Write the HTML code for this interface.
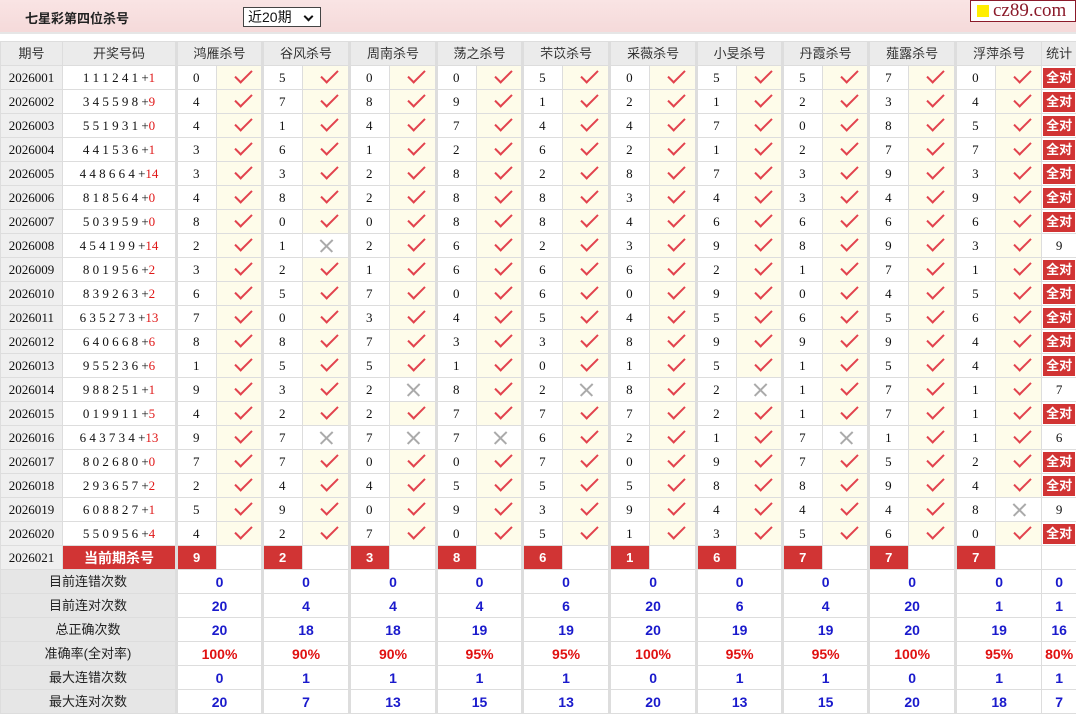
<!DOCTYPE html>
<html><head><meta charset="utf-8">
<style>
*{margin:0;padding:0;box-sizing:border-box}
body{width:1076px;height:711px;overflow:hidden;background:#fff;font-family:"Liberation Sans","Noto Sans CJK SC",sans-serif;position:relative}
.top{position:absolute;left:0;top:0;width:1076px;height:34px;background:linear-gradient(#f9e4e4,#f5dada);border-bottom:2px solid #e6e6e6}
.title{position:absolute;left:25px;top:8px;font-size:13px;font-weight:bold;color:#222}
.sel{position:absolute;left:243px;top:7px;width:78px;height:20px;border:1px solid #444;background:#fff;font-size:14px;padding-left:4px;line-height:18px;color:#111}
.sel:after{content:'';position:absolute;right:8px;top:5px;width:5px;height:5px;border-right:2px solid #111;border-bottom:2px solid #111;transform:rotate(45deg)}
.logo{position:absolute;left:970px;top:0;width:106px;height:22px;background:#fff;border:1px solid #8b1a2a;font-family:"Liberation Serif",serif;font-size:19px;color:#8b1a2a;line-height:19px;padding-left:22px}
.logo:before{content:'';position:absolute;left:6px;top:4px;width:12px;height:12px;background:#ffee00}
table{position:absolute;left:0;top:41px;border-collapse:collapse;table-layout:fixed;width:1076px}
tr{height:24px}
td{height:23px;line-height:18px;border:1px solid #ddd;text-align:center;font-family:"Liberation Serif",serif;font-size:13px;color:#111;padding:0;overflow:hidden;white-space:nowrap}
tr.h td{background:#ebebeb;font-family:"Liberation Sans","Noto Sans CJK SC",sans-serif;color:#333}
td.p{background:#efefef}
td.g{border-left:3px solid #ddd;text-align:left;padding-left:15px}
tr.h td.g{text-align:center;padding:0}
td.c{background:#fefcea;position:relative}
td.c:after{content:'';position:absolute;left:18px;top:4px;width:15px;height:7px;border-left:2px solid #e2434e;border-bottom:2px solid #e2434e;transform:rotate(-45deg)}
td.x{position:relative;background:#fff}
td.x:before,td.x:after{content:'';position:absolute;left:15px;top:11px;width:17px;height:1.5px;background:#aaa;transform:rotate(45deg)}
td.x:after{transform:rotate(-45deg)}
.r{color:#e01818}
td.q{padding:1px 1px}
td.q b,td.cur b{display:block;background:#d13434;color:#fff;font-family:"Liberation Sans","Noto Sans CJK SC",sans-serif;font-size:13px;line-height:20px}
td.cr{background:#d13434;color:#fff;font-weight:bold;text-align:left;padding-left:15px;font-family:"Liberation Sans",sans-serif}
td.cur{background:#d13434;color:#fff;font-weight:bold;font-family:"Liberation Sans","Noto Sans CJK SC",sans-serif;font-size:14px}
td.l{background:#e6e6e6;font-family:"Liberation Sans","Noto Sans CJK SC",sans-serif;color:#222}
td.v{font-family:"Liberation Sans",sans-serif;font-weight:bold;color:#1a1acc;font-size:14px;border-left:3px solid #ddd}
td.v.last{border-left:1px solid #ddd}
td.v.rr{color:#e01010}
</style></head><body>
<div class="top"><div class="title">七星彩第四位杀号</div><div class="sel">近20期</div></div>
<div class="logo">cz89.com</div>
<table>
<colgroup><col style="width:62px"><col style="width:114px">
<col style="width:40px"><col style="width:46px"><col style="width:40px"><col style="width:47px"><col style="width:40px"><col style="width:47px"><col style="width:40px"><col style="width:46px"><col style="width:40px"><col style="width:47px"><col style="width:40px"><col style="width:47px"><col style="width:40px"><col style="width:46px"><col style="width:40px"><col style="width:46px"><col style="width:40px"><col style="width:47px"><col style="width:40px"><col style="width:46px"><col style="width:35px"></colgroup>
<tr class="h"><td>期号</td><td>开奖号码</td><td class="g" colspan="2">鸿雁杀号</td><td class="g" colspan="2">谷风杀号</td><td class="g" colspan="2">周南杀号</td><td class="g" colspan="2">荡之杀号</td><td class="g" colspan="2">芣苡杀号</td><td class="g" colspan="2">采薇杀号</td><td class="g" colspan="2">小旻杀号</td><td class="g" colspan="2">丹霞杀号</td><td class="g" colspan="2">薤露杀号</td><td class="g" colspan="2">浮萍杀号</td><td>统计</td></tr>
<tr><td class="p">2026001</td><td>1 1 1 2 4 1 +<span class="r">1</span></td><td class="g">0</td><td class="c"></td><td class="g">5</td><td class="c"></td><td class="g">0</td><td class="c"></td><td class="g">0</td><td class="c"></td><td class="g">5</td><td class="c"></td><td class="g">0</td><td class="c"></td><td class="g">5</td><td class="c"></td><td class="g">5</td><td class="c"></td><td class="g">7</td><td class="c"></td><td class="g">0</td><td class="c"></td><td class="q"><b>全对</b></td></tr>
<tr><td class="p">2026002</td><td>3 4 5 5 9 8 +<span class="r">9</span></td><td class="g">4</td><td class="c"></td><td class="g">7</td><td class="c"></td><td class="g">8</td><td class="c"></td><td class="g">9</td><td class="c"></td><td class="g">1</td><td class="c"></td><td class="g">2</td><td class="c"></td><td class="g">1</td><td class="c"></td><td class="g">2</td><td class="c"></td><td class="g">3</td><td class="c"></td><td class="g">4</td><td class="c"></td><td class="q"><b>全对</b></td></tr>
<tr><td class="p">2026003</td><td>5 5 1 9 3 1 +<span class="r">0</span></td><td class="g">4</td><td class="c"></td><td class="g">1</td><td class="c"></td><td class="g">4</td><td class="c"></td><td class="g">7</td><td class="c"></td><td class="g">4</td><td class="c"></td><td class="g">4</td><td class="c"></td><td class="g">7</td><td class="c"></td><td class="g">0</td><td class="c"></td><td class="g">8</td><td class="c"></td><td class="g">5</td><td class="c"></td><td class="q"><b>全对</b></td></tr>
<tr><td class="p">2026004</td><td>4 4 1 5 3 6 +<span class="r">1</span></td><td class="g">3</td><td class="c"></td><td class="g">6</td><td class="c"></td><td class="g">1</td><td class="c"></td><td class="g">2</td><td class="c"></td><td class="g">6</td><td class="c"></td><td class="g">2</td><td class="c"></td><td class="g">1</td><td class="c"></td><td class="g">2</td><td class="c"></td><td class="g">7</td><td class="c"></td><td class="g">7</td><td class="c"></td><td class="q"><b>全对</b></td></tr>
<tr><td class="p">2026005</td><td>4 4 8 6 6 4 +<span class="r">14</span></td><td class="g">3</td><td class="c"></td><td class="g">3</td><td class="c"></td><td class="g">2</td><td class="c"></td><td class="g">8</td><td class="c"></td><td class="g">2</td><td class="c"></td><td class="g">8</td><td class="c"></td><td class="g">7</td><td class="c"></td><td class="g">3</td><td class="c"></td><td class="g">9</td><td class="c"></td><td class="g">3</td><td class="c"></td><td class="q"><b>全对</b></td></tr>
<tr><td class="p">2026006</td><td>8 1 8 5 6 4 +<span class="r">0</span></td><td class="g">4</td><td class="c"></td><td class="g">8</td><td class="c"></td><td class="g">2</td><td class="c"></td><td class="g">8</td><td class="c"></td><td class="g">8</td><td class="c"></td><td class="g">3</td><td class="c"></td><td class="g">4</td><td class="c"></td><td class="g">3</td><td class="c"></td><td class="g">4</td><td class="c"></td><td class="g">9</td><td class="c"></td><td class="q"><b>全对</b></td></tr>
<tr><td class="p">2026007</td><td>5 0 3 9 5 9 +<span class="r">0</span></td><td class="g">8</td><td class="c"></td><td class="g">0</td><td class="c"></td><td class="g">0</td><td class="c"></td><td class="g">8</td><td class="c"></td><td class="g">8</td><td class="c"></td><td class="g">4</td><td class="c"></td><td class="g">6</td><td class="c"></td><td class="g">6</td><td class="c"></td><td class="g">6</td><td class="c"></td><td class="g">6</td><td class="c"></td><td class="q"><b>全对</b></td></tr>
<tr><td class="p">2026008</td><td>4 5 4 1 9 9 +<span class="r">14</span></td><td class="g">2</td><td class="c"></td><td class="g">1</td><td class="x"></td><td class="g">2</td><td class="c"></td><td class="g">6</td><td class="c"></td><td class="g">2</td><td class="c"></td><td class="g">3</td><td class="c"></td><td class="g">9</td><td class="c"></td><td class="g">8</td><td class="c"></td><td class="g">9</td><td class="c"></td><td class="g">3</td><td class="c"></td><td>9</td></tr>
<tr><td class="p">2026009</td><td>8 0 1 9 5 6 +<span class="r">2</span></td><td class="g">3</td><td class="c"></td><td class="g">2</td><td class="c"></td><td class="g">1</td><td class="c"></td><td class="g">6</td><td class="c"></td><td class="g">6</td><td class="c"></td><td class="g">6</td><td class="c"></td><td class="g">2</td><td class="c"></td><td class="g">1</td><td class="c"></td><td class="g">7</td><td class="c"></td><td class="g">1</td><td class="c"></td><td class="q"><b>全对</b></td></tr>
<tr><td class="p">2026010</td><td>8 3 9 2 6 3 +<span class="r">2</span></td><td class="g">6</td><td class="c"></td><td class="g">5</td><td class="c"></td><td class="g">7</td><td class="c"></td><td class="g">0</td><td class="c"></td><td class="g">6</td><td class="c"></td><td class="g">0</td><td class="c"></td><td class="g">9</td><td class="c"></td><td class="g">0</td><td class="c"></td><td class="g">4</td><td class="c"></td><td class="g">5</td><td class="c"></td><td class="q"><b>全对</b></td></tr>
<tr><td class="p">2026011</td><td>6 3 5 2 7 3 +<span class="r">13</span></td><td class="g">7</td><td class="c"></td><td class="g">0</td><td class="c"></td><td class="g">3</td><td class="c"></td><td class="g">4</td><td class="c"></td><td class="g">5</td><td class="c"></td><td class="g">4</td><td class="c"></td><td class="g">5</td><td class="c"></td><td class="g">6</td><td class="c"></td><td class="g">5</td><td class="c"></td><td class="g">6</td><td class="c"></td><td class="q"><b>全对</b></td></tr>
<tr><td class="p">2026012</td><td>6 4 0 6 6 8 +<span class="r">6</span></td><td class="g">8</td><td class="c"></td><td class="g">8</td><td class="c"></td><td class="g">7</td><td class="c"></td><td class="g">3</td><td class="c"></td><td class="g">3</td><td class="c"></td><td class="g">8</td><td class="c"></td><td class="g">9</td><td class="c"></td><td class="g">9</td><td class="c"></td><td class="g">9</td><td class="c"></td><td class="g">4</td><td class="c"></td><td class="q"><b>全对</b></td></tr>
<tr><td class="p">2026013</td><td>9 5 5 2 3 6 +<span class="r">6</span></td><td class="g">1</td><td class="c"></td><td class="g">5</td><td class="c"></td><td class="g">5</td><td class="c"></td><td class="g">1</td><td class="c"></td><td class="g">0</td><td class="c"></td><td class="g">1</td><td class="c"></td><td class="g">5</td><td class="c"></td><td class="g">1</td><td class="c"></td><td class="g">5</td><td class="c"></td><td class="g">4</td><td class="c"></td><td class="q"><b>全对</b></td></tr>
<tr><td class="p">2026014</td><td>9 8 8 2 5 1 +<span class="r">1</span></td><td class="g">9</td><td class="c"></td><td class="g">3</td><td class="c"></td><td class="g">2</td><td class="x"></td><td class="g">8</td><td class="c"></td><td class="g">2</td><td class="x"></td><td class="g">8</td><td class="c"></td><td class="g">2</td><td class="x"></td><td class="g">1</td><td class="c"></td><td class="g">7</td><td class="c"></td><td class="g">1</td><td class="c"></td><td>7</td></tr>
<tr><td class="p">2026015</td><td>0 1 9 9 1 1 +<span class="r">5</span></td><td class="g">4</td><td class="c"></td><td class="g">2</td><td class="c"></td><td class="g">2</td><td class="c"></td><td class="g">7</td><td class="c"></td><td class="g">7</td><td class="c"></td><td class="g">7</td><td class="c"></td><td class="g">2</td><td class="c"></td><td class="g">1</td><td class="c"></td><td class="g">7</td><td class="c"></td><td class="g">1</td><td class="c"></td><td class="q"><b>全对</b></td></tr>
<tr><td class="p">2026016</td><td>6 4 3 7 3 4 +<span class="r">13</span></td><td class="g">9</td><td class="c"></td><td class="g">7</td><td class="x"></td><td class="g">7</td><td class="x"></td><td class="g">7</td><td class="x"></td><td class="g">6</td><td class="c"></td><td class="g">2</td><td class="c"></td><td class="g">1</td><td class="c"></td><td class="g">7</td><td class="x"></td><td class="g">1</td><td class="c"></td><td class="g">1</td><td class="c"></td><td>6</td></tr>
<tr><td class="p">2026017</td><td>8 0 2 6 8 0 +<span class="r">0</span></td><td class="g">7</td><td class="c"></td><td class="g">7</td><td class="c"></td><td class="g">0</td><td class="c"></td><td class="g">0</td><td class="c"></td><td class="g">7</td><td class="c"></td><td class="g">0</td><td class="c"></td><td class="g">9</td><td class="c"></td><td class="g">7</td><td class="c"></td><td class="g">5</td><td class="c"></td><td class="g">2</td><td class="c"></td><td class="q"><b>全对</b></td></tr>
<tr><td class="p">2026018</td><td>2 9 3 6 5 7 +<span class="r">2</span></td><td class="g">2</td><td class="c"></td><td class="g">4</td><td class="c"></td><td class="g">4</td><td class="c"></td><td class="g">5</td><td class="c"></td><td class="g">5</td><td class="c"></td><td class="g">5</td><td class="c"></td><td class="g">8</td><td class="c"></td><td class="g">8</td><td class="c"></td><td class="g">9</td><td class="c"></td><td class="g">4</td><td class="c"></td><td class="q"><b>全对</b></td></tr>
<tr><td class="p">2026019</td><td>6 0 8 8 2 7 +<span class="r">1</span></td><td class="g">5</td><td class="c"></td><td class="g">9</td><td class="c"></td><td class="g">0</td><td class="c"></td><td class="g">9</td><td class="c"></td><td class="g">3</td><td class="c"></td><td class="g">9</td><td class="c"></td><td class="g">4</td><td class="c"></td><td class="g">4</td><td class="c"></td><td class="g">4</td><td class="c"></td><td class="g">8</td><td class="x"></td><td>9</td></tr>
<tr><td class="p">2026020</td><td>5 5 0 9 5 6 +<span class="r">4</span></td><td class="g">4</td><td class="c"></td><td class="g">2</td><td class="c"></td><td class="g">7</td><td class="c"></td><td class="g">0</td><td class="c"></td><td class="g">5</td><td class="c"></td><td class="g">1</td><td class="c"></td><td class="g">3</td><td class="c"></td><td class="g">5</td><td class="c"></td><td class="g">6</td><td class="c"></td><td class="g">0</td><td class="c"></td><td class="q"><b>全对</b></td></tr>
<tr><td class="p">2026021</td><td class="cur">当前期杀号</td><td class="g cr">9</td><td></td><td class="g cr">2</td><td></td><td class="g cr">3</td><td></td><td class="g cr">8</td><td></td><td class="g cr">6</td><td></td><td class="g cr">1</td><td></td><td class="g cr">6</td><td></td><td class="g cr">7</td><td></td><td class="g cr">7</td><td></td><td class="g cr">7</td><td></td><td></td></tr>
<tr><td class="l" colspan="2">目前连错次数</td><td class="v" colspan="2">0</td><td class="v" colspan="2">0</td><td class="v" colspan="2">0</td><td class="v" colspan="2">0</td><td class="v" colspan="2">0</td><td class="v" colspan="2">0</td><td class="v" colspan="2">0</td><td class="v" colspan="2">0</td><td class="v" colspan="2">0</td><td class="v" colspan="2">0</td><td class="v last">0</td></tr>
<tr><td class="l" colspan="2">目前连对次数</td><td class="v" colspan="2">20</td><td class="v" colspan="2">4</td><td class="v" colspan="2">4</td><td class="v" colspan="2">4</td><td class="v" colspan="2">6</td><td class="v" colspan="2">20</td><td class="v" colspan="2">6</td><td class="v" colspan="2">4</td><td class="v" colspan="2">20</td><td class="v" colspan="2">1</td><td class="v last">1</td></tr>
<tr><td class="l" colspan="2">总正确次数</td><td class="v" colspan="2">20</td><td class="v" colspan="2">18</td><td class="v" colspan="2">18</td><td class="v" colspan="2">19</td><td class="v" colspan="2">19</td><td class="v" colspan="2">20</td><td class="v" colspan="2">19</td><td class="v" colspan="2">19</td><td class="v" colspan="2">20</td><td class="v" colspan="2">19</td><td class="v last">16</td></tr>
<tr><td class="l" colspan="2">准确率(全对率)</td><td class="v rr" colspan="2">100%</td><td class="v rr" colspan="2">90%</td><td class="v rr" colspan="2">90%</td><td class="v rr" colspan="2">95%</td><td class="v rr" colspan="2">95%</td><td class="v rr" colspan="2">100%</td><td class="v rr" colspan="2">95%</td><td class="v rr" colspan="2">95%</td><td class="v rr" colspan="2">100%</td><td class="v rr" colspan="2">95%</td><td class="v rr last">80%</td></tr>
<tr><td class="l" colspan="2">最大连错次数</td><td class="v" colspan="2">0</td><td class="v" colspan="2">1</td><td class="v" colspan="2">1</td><td class="v" colspan="2">1</td><td class="v" colspan="2">1</td><td class="v" colspan="2">0</td><td class="v" colspan="2">1</td><td class="v" colspan="2">1</td><td class="v" colspan="2">0</td><td class="v" colspan="2">1</td><td class="v last">1</td></tr>
<tr><td class="l" colspan="2">最大连对次数</td><td class="v" colspan="2">20</td><td class="v" colspan="2">7</td><td class="v" colspan="2">13</td><td class="v" colspan="2">15</td><td class="v" colspan="2">13</td><td class="v" colspan="2">20</td><td class="v" colspan="2">13</td><td class="v" colspan="2">15</td><td class="v" colspan="2">20</td><td class="v" colspan="2">18</td><td class="v last">7</td></tr>
</table>
</body></html>
